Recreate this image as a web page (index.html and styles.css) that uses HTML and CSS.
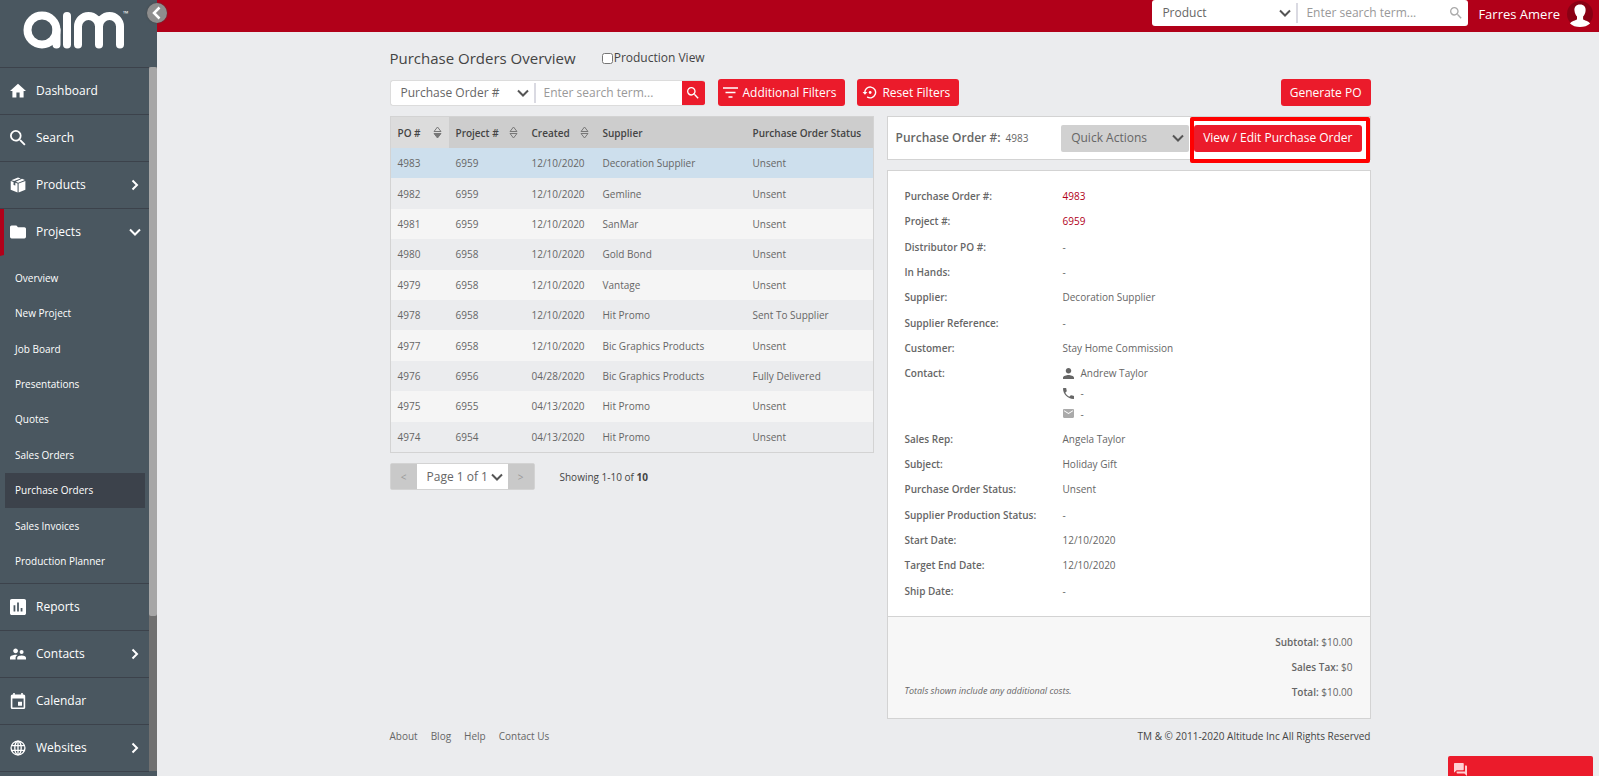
FILE: index.html
```html
<!DOCTYPE html>
<html lang="en">
<head>
<meta charset="utf-8">
<title>Purchase Orders Overview</title>
<link rel="stylesheet" href="styles.css">
</head>
<body>
<svg class="sprite" aria-hidden="true">
  <symbol id="chevron-down" viewBox="0 0 12 8"><path d="M1 1.500 6 6.500 11 1.500" fill="none" stroke="currentColor" stroke-width="2"/></symbol>
  <symbol id="chevron-right" viewBox="0 0 8 12"><path d="M1.500 1.500 6 6 1.500 10.500" fill="none" stroke="currentColor" stroke-width="2"/></symbol>
  <symbol id="magnifier" viewBox="3 3 18 18"><path fill="currentColor" d="M15.500 14h-.79l-.28-.27A6.470 6.470 0 0 0 16 9.500 6.500 6.500 0 1 0 9.500 16c1.610 0 3.090-.59 4.230-1.570l.27.28v.79l5 4.990L20.490 19l-4.990-5zm-6 0C7.010 14 5 11.990 5 9.500S7.010 5 9.500 5 14 7.010 14 9.500 11.990 14 9.500 14z"/></symbol>
  <symbol id="sort" viewBox="0 0 9 13"><path d="M1 5.500 4.500 1 8 5.500z M1 7.500h7L4.500 12z" fill="none" stroke="currentColor"/></symbol>
  <symbol id="sort-down" viewBox="0 0 9 13"><path d="M1 5.500 4.500 1 8 5.500z" fill="none" stroke="currentColor"/><path d="M1 7.500h7L4.500 12z" fill="currentColor" stroke="currentColor"/></symbol>
</svg>
<aside class="sidebar">
  <div class="brand">
    <svg class="logo" viewBox="20 8 114 44" role="img" aria-label="aim">
      <g fill="none" stroke="#fff" stroke-width="8" stroke-linecap="round">
        <circle cx="42" cy="30" r="14.500"/>
        <path d="M56.500 30V44.500M67 16V44.500M78 44.500V26.500a10.500 10.500 0 0 1 21 0V44.500M99 26.500a10.500 10.500 0 0 1 21 0V44.500"/>
      </g>
      <text x="123" y="16" class="tm">™</text>
    </svg>
    <button class="collapse" aria-label="Collapse menu"><svg viewBox="0 0 20 20"><path d="M12.500 4.500 7 10l5.500 5.500" fill="none" stroke="#fff" stroke-width="2.500"/></svg></button>
  </div>
  <div class="menu-scroll">
    <nav class="menu">
      <a class="item" href="#"><svg class="icon" viewBox="2 2 20 20"><path fill="currentColor" d="M10 20v-6h4v6h5v-8h3L12 3 2 12h3v8z"/></svg>Dashboard</a>
      <a class="item" href="#"><svg class="icon"><use href="#magnifier"/></svg>Search</a>
      <a class="item" href="#"><svg class="icon" viewBox="0 0 18 18"><path fill="currentColor" d="M9 .5 12 1.600 4.600 4.500 1.500 3.600zM13.500 2.100 16.800 3.500 9.300 6.400 6.400 5.300zM.8 4.600l3.200 1.100v3.200l2 .8V6.500l2.500.9v10L.8 14.300zM17.300 4.600v9.700l-7.600 3.100v-10z"/></svg>Products<svg class="arrow right"><use href="#chevron-right"/></svg></a>
      <a class="item current" href="#"><svg class="icon" viewBox="2 3 20 18"><path fill="currentColor" d="M10 4H4c-1.100 0-2 .9-2 2v12c0 1.100.9 2 2 2h16c1.100 0 2-.9 2-2V8c0-1.100-.9-2-2-2h-8z"/></svg>Projects<svg class="arrow down"><use href="#chevron-down"/></svg></a>
      <div class="submenu">
        <a href="#">Overview</a>
        <a href="#">New Project</a>
        <a href="#">Job Board</a>
        <a href="#">Presentations</a>
        <a href="#">Quotes</a>
        <a href="#">Sales Orders</a>
        <a href="#" class="selected">Purchase Orders</a>
        <a href="#">Sales Invoices</a>
        <a href="#">Production Planner</a>
      </div>
      <a class="item" href="#"><svg class="icon" viewBox="3 3 18 18"><path fill="currentColor" d="M19 3H5c-1.100 0-2 .9-2 2v14c0 1.100.9 2 2 2h14c1.100 0 2-.9 2-2V5c0-1.100-.9-2-2-2zM9 17H7v-7h2v7zm4 0h-2V7h2v10zm4 0h-2v-4h2v4z"/></svg>Reports</a>
      <a class="item" href="#"><svg class="icon" viewBox="2 2 20 20"><path fill="currentColor" d="M16.500 12a2.500 2.500 0 1 0 0-5 2.500 2.500 0 0 0 0 5zM9 11c1.660 0 2.990-1.340 2.990-3S10.660 5 9 5 6 6.340 6 8s1.340 3 3 3zm7.500 3c-1.830 0-5.500.92-5.500 2.750V19h11v-2.250C22 14.920 18.330 14 16.500 14zM9 13c-2.330 0-7 1.170-7 3.500V19h7v-2.250c0-.85.33-2.340 2.370-3.470C10.500 13.100 9.660 13 9 13z"/></svg>Contacts<svg class="arrow right"><use href="#chevron-right"/></svg></a>
      <a class="item" href="#"><svg class="icon" viewBox="2 1 20 20"><path fill="currentColor" d="M17 12h-5v5h5v-5zM16 1v2H8V1H6v2H5c-1.110 0-2 .9-2 2v14c0 1.100.89 2 2 2h14c1.100 0 2-.9 2-2V5c0-1.100-.9-2-2-2h-1V1h-2zm3 18H5V8h14v11z"/></svg>Calendar</a>
      <a class="item" href="#"><svg class="icon" viewBox="0 0 18 18"><g fill="none" stroke="currentColor" stroke-width="1.500"><circle cx="9" cy="9" r="7.800"/><ellipse cx="9" cy="9" rx="3.600" ry="7.800"/><path d="M9 1v16M1.800 6.300h14.400M1.800 11.700h14.400"/></g></svg>Websites<svg class="arrow right"><use href="#chevron-right"/></svg></a>
    </nav>
    <div class="track"><div class="thumb"></div></div>
  </div>
</aside>
<div class="page">
  <header class="topbar">
    <form class="search top-search">
      <span class="pick"><select aria-label="Search in"><option>Product</option></select><svg class="caret"><use href="#chevron-down"/></svg></span>
      <input type="search" aria-label="Search term" placeholder="Enter search term...">
      <button type="button" class="plain" aria-label="Search"><svg class="glass"><use href="#magnifier"/></svg></button>
    </form>
    <a class="user" href="#">Farres Amere
      <svg class="avatar" viewBox="0 0 26 26"><circle cx="13" cy="13" r="13" fill="#8a0014"/><path fill="#fff" d="M13 3.500c4 0 6 2.600 5.600 6.200-.2 2.500-1.300 4.500-2.500 5.800v2.800c1 1.300 5 1.500 7 4.200C20.500 25 17 26 13 26s-7.500-1-10-3.500c2-2.700 6-2.900 7-4.200v-2.800c-1.200-1.300-2.300-3.300-2.500-5.800C7 6.100 9 3.500 13 3.500z"/></svg>
    </a>
  </header>
  <main class="content">
    <div class="heading">
      <h1>Purchase Orders Overview</h1>
      <label class="check"><input type="checkbox">Production View</label>
    </div>
    <div class="toolbar">
      <form class="search list-search">
        <span class="pick"><select aria-label="Filter by"><option>Purchase Order #</option></select><svg class="caret"><use href="#chevron-down"/></svg></span>
        <input type="search" aria-label="Filter term" placeholder="Enter search term...">
        <button type="button" class="go" aria-label="Search"><svg class="glass"><use href="#magnifier"/></svg></button>
      </form>
      <button class="btn"><svg class="btn-icon" viewBox="0 0 15 12"><path d="M0 1.500h15M2.500 6h10M5.500 10.500h4" stroke="currentColor" stroke-width="1.600"/></svg>Additional Filters</button>
      <button class="btn"><svg class="btn-icon" viewBox="0 0 15 14"><path d="M2.500 7.500A5.800 5.800 0 1 1 5 11.700" fill="none" stroke="currentColor" stroke-width="1.500"/><path d="M0 6.500h5.200L2.600 9.500z" fill="currentColor"/><circle cx="8.200" cy="7" r="1.500" fill="currentColor"/></svg>Reset Filters</button>
      <button class="btn last">Generate PO</button>
    </div>
    <div class="columns">
      <section class="list">
        <table class="orders">
          <colgroup><col class="c-po"><col class="c-project"><col class="c-created"><col class="c-supplier"><col></colgroup>
          <thead>
            <tr>
              <th class="sorted"><span class="sortable">PO #<svg class="sort"><use href="#sort-down"/></svg></span></th>
              <th><span class="sortable">Project #<svg class="sort"><use href="#sort"/></svg></span></th>
              <th><span class="sortable">Created<svg class="sort"><use href="#sort"/></svg></span></th>
              <th>Supplier</th><th>Purchase Order Status</th>
            </tr>
          </thead>
          <tbody>
            <tr class="active"><td>4983</td><td>6959</td><td>12/10/2020</td><td>Decoration Supplier</td><td>Unsent</td></tr>
            <tr><td>4982</td><td>6959</td><td>12/10/2020</td><td>Gemline</td><td>Unsent</td></tr>
            <tr><td>4981</td><td>6959</td><td>12/10/2020</td><td>SanMar</td><td>Unsent</td></tr>
            <tr><td>4980</td><td>6958</td><td>12/10/2020</td><td>Gold Bond</td><td>Unsent</td></tr>
            <tr><td>4979</td><td>6958</td><td>12/10/2020</td><td>Vantage</td><td>Unsent</td></tr>
            <tr><td>4978</td><td>6958</td><td>12/10/2020</td><td>Hit Promo</td><td>Sent To Supplier</td></tr>
            <tr><td>4977</td><td>6958</td><td>12/10/2020</td><td>Bic Graphics Products</td><td>Unsent</td></tr>
            <tr><td>4976</td><td>6956</td><td>04/28/2020</td><td>Bic Graphics Products</td><td>Fully Delivered</td></tr>
            <tr><td>4975</td><td>6955</td><td>04/13/2020</td><td>Hit Promo</td><td>Unsent</td></tr>
            <tr><td>4974</td><td>6954</td><td>04/13/2020</td><td>Hit Promo</td><td>Unsent</td></tr>
          </tbody>
        </table>
        <div class="paging">
          <div class="pager">
            <button aria-label="Previous page">&lt;</button>
            <span class="pick"><select aria-label="Page"><option>Page 1 of 1</option></select><svg class="caret"><use href="#chevron-down"/></svg></span>
            <button aria-label="Next page">&gt;</button>
          </div>
          <p class="showing">Showing 1-10 of <b>10</b></p>
        </div>
      </section>
      <section class="detail">
        <div class="card detail-head">
          <h2>Purchase Order #: <span>4983</span></h2>
          <span class="pick quick"><select aria-label="Quick actions"><option>Quick Actions</option></select><svg class="caret"><use href="#chevron-down"/></svg></span>
          <div class="marked"><button class="btn">View / Edit Purchase Order</button></div>
        </div>
        <div class="card">
          <dl class="fields">
            <dt>Purchase Order #:</dt><dd><a href="#">4983</a></dd>
            <dt>Project #:</dt><dd><a href="#">6959</a></dd>
            <dt>Distributor PO #:</dt><dd>-</dd>
            <dt>In Hands:</dt><dd>-</dd>
            <dt>Supplier:</dt><dd>Decoration Supplier</dd>
            <dt>Supplier Reference:</dt><dd>-</dd>
            <dt>Customer:</dt><dd>Stay Home Commission</dd>
            <dt>Contact:</dt>
            <dd class="contact">
              <span><svg viewBox="4 4 16 16"><path fill="currentColor" d="M12 12c2.210 0 4-1.790 4-4s-1.790-4-4-4-4 1.790-4 4 1.790 4 4 4zm0 2c-2.670 0-8 1.340-8 4v2h16v-2c0-2.660-5.330-4-8-4z"/></svg>Andrew Taylor</span>
              <span><svg viewBox="3 3 18 18"><path fill="currentColor" d="M6.620 10.790a15.050 15.050 0 0 0 6.590 6.590l2.200-2.200c.27-.27.67-.36 1.020-.24 1.120.37 2.330.57 3.570.57.55 0 1 .45 1 1V20c0 .55-.45 1-1 1C10.610 21 3 13.390 3 4c0-.55.45-1 1-1h3.500c.55 0 1 .45 1 1 0 1.250.2 2.450.57 3.570.11.35.03.74-.25 1.020z"/></svg>-</span>
              <span class="mail"><svg viewBox="2 3 20 18"><path fill="currentColor" d="M20 4H4c-1.100 0-2 .9-2 2v12c0 1.100.9 2 2 2h16c1.100 0 2-.9 2-2V6c0-1.100-.9-2-2-2zm0 4-8 5-8-5V6l8 5 8-5z"/></svg>-</span>
            </dd>
            <dt>Sales Rep:</dt><dd>Angela Taylor</dd>
            <dt>Subject:</dt><dd>Holiday Gift</dd>
            <dt>Purchase Order Status:</dt><dd>Unsent</dd>
            <dt>Supplier Production Status:</dt><dd>-</dd>
            <dt>Start Date:</dt><dd>12/10/2020</dd>
            <dt>Target End Date:</dt><dd>12/10/2020</dd>
            <dt>Ship Date:</dt><dd>-</dd>
          </dl>
          <div class="totals">
            <em>Totals shown include any additional costs.</em>
            <div class="sums">
              <p><b>Subtotal:</b> $10.00</p>
              <p><b>Sales Tax:</b> $0</p>
              <p><b>Total:</b> $10.00</p>
            </div>
          </div>
        </div>
      </section>
    </div>
    <footer class="footer">
      <a href="#">About</a><a href="#">Blog</a><a href="#">Help</a><a href="#">Contact Us</a>
      <p>TM &amp; © 2011-2020 Altitude Inc All Rights Reserved</p>
    </footer>
  </main>
</div>
<button class="chat" aria-label="Chat"><svg viewBox="2 2 20 20"><path fill="#ffd0d4" d="M21 6h-2v9H6v2c0 .55.45 1 1 1h11l4 4V7c0-.55-.45-1-1-1zm-4 6V3c0-.55-.45-1-1-1H3c-.55 0-1 .45-1 1v14l4-4h10c.55 0 1-.45 1-1z"/></svg></button>
</body>
</html>
```
FILE: styles.css
```css
* { box-sizing: border-box; }

body {
  margin: 0;
  display: flex;
  height: 100vh;
  overflow: hidden;
  background: #ebecee;
  color: #666;
  font: 10px/16px "Open Sans", sans-serif;
}

h1, h2, p, dl, dd { margin: 0; }
a { color: inherit; text-decoration: none; }
button, select, input { font: inherit; color: inherit; }
button { border: 0; padding: 0; cursor: pointer; }
svg { display: block; }
.sprite { position: absolute; width: 0; height: 0; }

/* Sidebar */
.sidebar {
  flex: none;
  width: 157px;
  display: flex;
  flex-direction: column;
  background: #4a5760;
  color: #fff;
}
.brand { position: relative; flex: none; height: 67px; padding: 8px 20px; }
.logo { width: 114px; height: 44px; }
.tm { fill: #fff; font-size: 7px; }
.collapse {
  position: absolute;
  top: 3px;
  right: -10px;
  width: 20px;
  height: 20px;
  border-radius: 50%;
  background: #8e8e8e;
  box-shadow: 0 0 2px #444;
}
.menu-scroll { flex: 1; min-height: 0; display: flex; overflow: hidden; }
.menu { flex: 1; border-top: 1px solid #3c424b; }
.item {
  display: flex;
  align-items: center;
  height: 47px;
  padding: 0 10px;
  border-bottom: 1px solid #3c424b;
  font-size: 12px;
  font-weight: 500;
}
.icon { width: 16px; height: 16px; margin-right: 10px; }
.arrow { margin-left: auto; }
.arrow.right { width: 8px; height: 12px; }
.arrow.down { width: 12px; height: 8px; margin-right: -2px; }
.current { border-left: 4px solid #b10019; border-bottom-color: transparent; padding-left: 6px; }
.submenu {
  display: grid;
  grid-auto-rows: 1fr;
  min-height: 328px;
  padding: 4px 4px 4px 5px;
  border-bottom: 1px solid #3c424b;
  font-weight: 500;
}
.submenu a { display: flex; align-items: center; padding: 0 10px; }
.submenu .selected { background: #3c424b; }
.track { width: 8px; margin-bottom: 5px; background: #707070; }
.thumb { height: 78%; border-radius: 2px; background: #a6a6a6; }

/* Top bar */
.page { flex: 1; min-width: 0; }
.topbar {
  display: flex;
  justify-content: flex-end;
  align-items: flex-start;
  gap: 10px;
  height: 32px;
  padding-right: 6px;
  background: #b10019;
}
.user { display: flex; align-items: center; gap: 7px; height: 28px; color: #fff; font-size: 13px; }
.avatar { width: 26px; height: 26px; }

/* Form controls */
.search {
  display: flex;
  align-items: center;
  overflow: hidden;
  border-radius: 3px;
  background: #fff;
  font-size: 12px;
}
.pick { display: grid; align-items: center; }
.pick select, .pick .caret { grid-area: 1 / 1; }
.pick select {
  width: 100%;
  height: 100%;
  appearance: none;
  border: 0;
  padding: 0 10px;
  background: transparent;
  outline: 0;
}
.caret { width: 12px; height: 8px; justify-self: end; margin-right: 5px; color: #555; pointer-events: none; }
.search .pick { height: 20px; border-right: 2px solid #dadae2; }
.search input { flex: 1; min-width: 0; border: 0; padding: 0 8px; background: transparent; outline: 0; }
.search input::placeholder { color: #999; opacity: 1; }
.glass { width: 12px; height: 12px; }
.top-search { width: 316px; height: 26px; }
.top-search .pick { width: 146px; }
.plain { padding: 0 6px; background: transparent; color: #aaa; }
.list-search { width: 315px; height: 26px; border: 1px solid #dcdcdc; border-right: 0; margin-right: 1px; }
.list-search .pick { width: 145px; }
.go { display: grid; place-items: center; width: 23px; height: 26px; background: #eb1b2b; color: #fff; }
.btn {
  display: flex;
  align-items: center;
  gap: 5px;
  height: 27px;
  padding: 0 9px;
  border-radius: 3px;
  background: #eb1b2b;
  color: #fff;
  font-size: 12px;
  white-space: nowrap;
}
.btn-icon { width: 15px; height: 13px; margin-left: -4px; }

/* Content */
.content { width: 981px; max-width: 100%; margin: 0 auto; position: relative; left: 2px; }
.heading { display: flex; align-items: center; gap: 26px; padding-top: 14px; }
.heading h1 { color: #444; font-size: 15px; line-height: 24px; font-weight: 400; }
.check { display: flex; align-items: center; color: #444; font-size: 12px; }
.check input { width: 11px; height: 11px; margin: 0 1px 0 0; }
.toolbar { display: flex; align-items: center; gap: 12px; margin-top: 9px; }
.last { margin-left: auto; }
.columns { display: flex; gap: 13px; margin-top: 10px; }
.list { flex: 1; min-width: 0; }
.detail { flex: 1; min-width: 0; }

.orders {
  width: 100%;
  height: 337px;
  table-layout: fixed;
  border: 1px solid #d3d3d3;
  border-collapse: separate;
  border-spacing: 0;
  background: #f5f5f5;
}
.c-po { width: 58px; }
.c-project { width: 76px; }
.c-created { width: 71px; }
.c-supplier { width: 150px; }
.orders th {
  height: 31px;
  padding: 0 7px;
  background: #cdcdcd;
  color: #444;
  font-weight: 600;
  text-align: left;
  white-space: nowrap;
}
.orders .sorted { background: #dcdcdc; }
.orders td { padding: 0 7px; }
.orders tbody tr:nth-child(even) { background: #ebecee; }
.orders .active { background: #cddfed; }
.sortable { display: flex; align-items: center; justify-content: space-between; }
.sort { width: 9px; height: 13px; color: #777; }

.paging { display: flex; align-items: center; gap: 25px; margin-top: 10px; }
.pager {
  display: flex;
  height: 27px;
  border: 1px solid #d3d3d3;
  border-radius: 2px;
  background: #fff;
  font-size: 12px;
}
.pager button { width: 26px; background: #c9c9c9; color: #999; font-size: 10px; }
.pager .pick { width: 91px; }
.showing { color: #444; }

.card { border: 1px solid #d3d3d3; background: #fff; }
.detail-head { position: relative; display: flex; align-items: center; height: 44px; padding: 0 8px; margin-bottom: 10px; }
.detail-head h2 { flex: 1; font-size: 12px; font-weight: 600; white-space: nowrap; }
.detail-head h2 span { margin-left: 2px; font-size: 10px; font-weight: 400; }
.quick { width: 128px; height: 27px; margin-right: 5px; border-radius: 2px; background: #d1d1d1; font-size: 12px; }
.marked { position: relative; }
.marked::after { content: ""; position: absolute; inset: -8px -8px -11px -4px; border: 4px solid #f00; border-radius: 2px; pointer-events: none; }

.fields {
  display: grid;
  grid-template-columns: 158px 1fr;
  min-height: 445px;
  padding: 12px 17px 13px;
}
.fields dt, .fields dd { padding: 5px 0 4px; }
.fields dt, .sums b { font-weight: 600; }
.fields a { color: #b10019; }
.contact { display: grid; gap: 4px; }
.contact span { display: flex; align-items: center; gap: 7px; }
.contact svg { width: 11px; height: 11px; }
.mail svg { color: #aaa; }
.totals {
  display: flex;
  justify-content: space-between;
  align-items: flex-end;
  padding: 12px 17px 14px;
  border-top: 1px solid #d3d3d3;
  background: #f7f7f7;
}
.totals em { padding-bottom: 5px; font-size: 9px; }
.sums { text-align: right; }
.sums p { padding: 5px 0 4px; }

.footer { display: flex; gap: 13px; margin-top: 9px; }
.footer p { margin-left: auto; color: #444; }

.chat {
  position: fixed;
  right: 6px;
  bottom: 0;
  width: 145px;
  height: 20px;
  padding: 7px 6px 0;
  border-radius: 2px 2px 0 0;
  background: #eb1b2b;
}
.chat svg { width: 13px; height: 13px; }
```
